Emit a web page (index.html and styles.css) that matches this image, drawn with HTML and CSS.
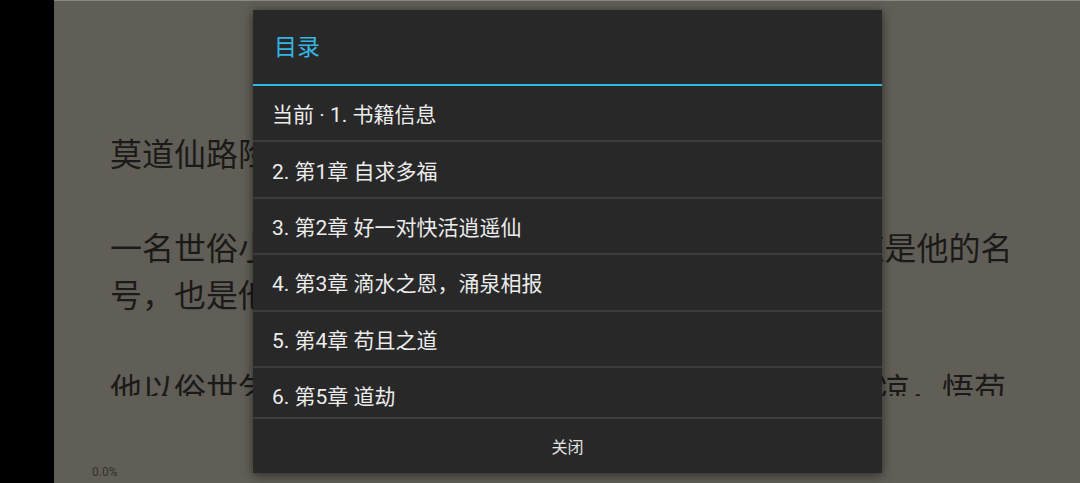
FILE: index.html
```html
<!DOCTYPE html>
<html lang="zh-CN">
<head>
<meta charset="utf-8">
<title>目录</title>
<link rel="stylesheet" href="styles.css">
</head>
<body>
<div class="screen">
  <div class="side"></div>
  <div class="reader">
    <div class="page">
      <p>莫道仙路险，苟道亦长生。</p>
      <p>一名世俗小子，误入修仙界，&thinsp;凭着苟功步步为营，苟道是他的名号，也是他的立身之本。</p>
      <p>他以俗世乞儿之身，踏入仙门，见惯了人情冷暖世态炎凉，悟苟道真谛，一路苟到了最后。</p>
    </div>
    <div class="progress">0.0%</div>
  </div>

  <div class="dialog">
    <div class="dialog-title">目录</div>
    <ul class="toc">
      <li>当前 · 1. 书籍信息</li>
      <li>2. 第1章 自求多福</li>
      <li>3. 第2章 好一对快活逍遥仙</li>
      <li>4. 第3章 滴水之恩，涌泉相报</li>
      <li>5. 第4章 苟且之道</li>
      <li>6. 第5章 道劫</li>
    </ul>
    <div class="dialog-buttons">
      <button class="btn">关闭</button>
    </div>
  </div>
</div>
</body>
</html>
```

FILE: styles.css
```css
html, body {
  margin: 0;
  padding: 0;
  width: 1080px;
  height: 483px;
  overflow: hidden;
  background: #000;
}

.screen {
  position: relative;
  display: flex;
  width: 1080px;
  height: 483px;
  font-family: Roboto, "Noto Sans CJK SC", sans-serif;
}

.side {
  width: 54px;
  flex: none;
  background: #000;
}

.reader {
  flex: 1;
  display: flex;
  flex-direction: column;
  background: #615e57;
  border-top: 1px solid #8a8883;
  box-sizing: border-box;
}

.page {
  margin: 131px 0 0 56px;
  width: 920px;
  height: 264px;
  overflow: hidden;
  font-family: Roboto, "Noto Sans CJK SC", sans-serif;
  font-size: 32px;
  line-height: 47px;
  color: #1b1a18;
}

.page p {
  margin: 0 0 47px 0;
}

.progress {
  margin-top: auto;
  padding: 0 0 3px 38px;
  font-family: Roboto, "Noto Sans CJK SC", sans-serif;
  font-size: 12px;
  line-height: 16px;
  color: #33312d;
}

.dialog {
  position: absolute;
  left: 253px;
  top: 10px;
  width: 629px;
  height: 463px;
  background: #282828;
  box-shadow: 0 2px 10px rgba(0, 0, 0, 0.55);
  display: flex;
  flex-direction: column;
  overflow: hidden;
}

.dialog-title {
  flex: none;
  height: 76px;
  box-sizing: border-box;
  padding: 0 0 4px 21px;
  display: flex;
  align-items: center;
  font-size: 23px;
  color: #33b5e5;
  border-bottom: 2px solid #33b5e5;
}

.toc {
  list-style: none;
  margin: 0;
  padding: 0;
  height: 331px;
  flex: none;
  overflow: hidden;
}

.toc li {
  box-sizing: border-box;
  height: 56.4px;
  padding: 0 0 0 19px;
  display: flex;
  align-items: center;
  font-size: 21px;
  color: #ececec;
  border-bottom: 2px solid #3b3b3b;
}

.dialog-buttons {
  flex: 1;
  border-top: 2px solid #3f3f3f;
  display: flex;
  align-items: center;
  justify-content: center;
}

.btn {
  background: none;
  border: none;
  padding: 0;
  font-family: Roboto, "Noto Sans CJK SC", sans-serif;
  font-size: 16px;
  color: #e4e4e4;
}
```
